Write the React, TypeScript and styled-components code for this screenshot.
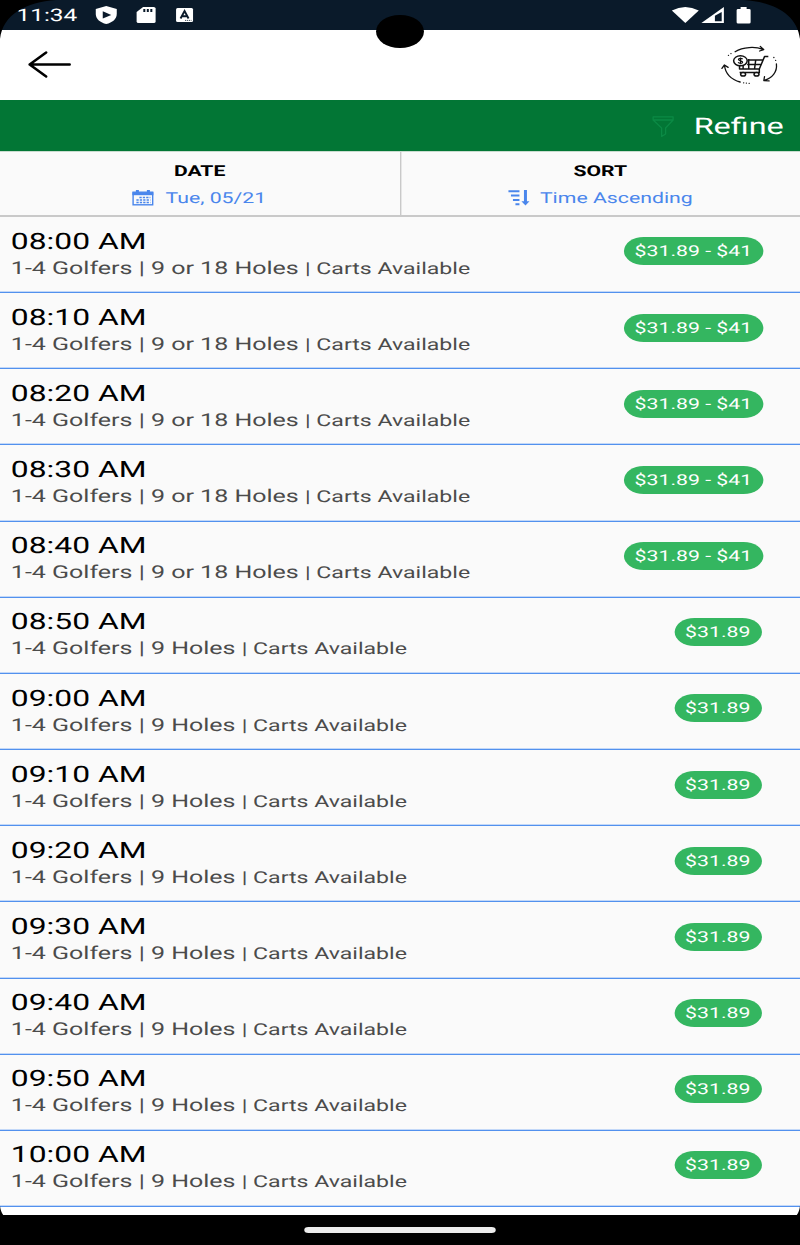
import React from 'react';
import styled, { createGlobalStyle } from 'styled-components';

const STRETCH = 800 / 568;

const GlobalStyle = createGlobalStyle`
  * { box-sizing: border-box; }
  html, body { margin: 0; padding: 0; background: #000; overflow: hidden; }
  body { font-family: Roboto, "Liberation Sans", sans-serif; text-rendering: geometricPrecision; }
`;

const Viewport = styled.div`
  width: 800px;
  height: 1245px;
  overflow: hidden;
`;

const Screen = styled.div`
  position: relative;
  display: flex;
  flex-direction: column;
  width: 568px;
  height: 1245px;
  background: #000;
  transform: scaleX(${STRETCH});
  transform-origin: 0 0;
`;

const StatusBar = styled.div`
  display: flex;
  align-items: flex-start;
  justify-content: space-between;
  height: 30px;
  flex: none;
  padding: 0 35.2px 0 11.8px;
  background: #0a1a2a;
  color: #fff;
`;

const StatusGroup = styled.div`
  display: flex;
  align-items: flex-start;
`;

const Clock = styled.span`
  width: 56.3px;
  font-size: 17.3px;
  line-height: 32px;
`;

const IconSvg = styled.svg<{ $w: number; $h: number; $mt?: number; $mr?: number }>`
  display: block;
  flex: none;
  overflow: visible;
  width: ${(p) => p.$w / STRETCH}px;
  height: ${(p) => p.$h}px;
  margin-top: ${(p) => p.$mt ?? 0}px;
  margin-right: ${(p) => (p.$mr ?? 0) / STRETCH}px;
`;

type IconProps = { w: number; h: number; mt?: number; mr?: number; children: React.ReactNode };

const Icon = ({ w, h, mt, mr, children }: IconProps) => (
  <IconSvg $w={w} $h={h} $mt={mt} $mr={mr} viewBox={`0 0 ${w} ${h}`} preserveAspectRatio="none" fill="none">
    {children}
  </IconSvg>
);

const Header = styled.header`
  display: flex;
  align-items: flex-start;
  justify-content: space-between;
  flex: none;
  height: 70px;
  padding: 16px 16.6px 0 20.4px;
  background: #fff;
`;

const RefineBar = styled.div`
  display: flex;
  align-items: center;
  justify-content: flex-end;
  flex: none;
  height: 51px;
  padding: 2px 11.5px 0 0;
  background: #027635;
  color: #fff;
  font-size: 23px;
  line-height: 49px;
`;

const Filters = styled.div`
  display: flex;
  flex: none;
  height: 66px;
  background: #fafafa;
  border-top: 1px solid #c9dccf;
  border-bottom: 2px solid #c9c9c9;
`;

const Filter = styled.div`
  flex: 1;
  display: flex;
  flex-direction: column;
  align-items: center;
  padding-top: 8.6px;
  & + & { border-left: 1px solid #c9c9c9; }
`;

const FilterLabel = styled.div`
  font-size: 15px;
  font-weight: 700;
  line-height: 20px;
  color: #000;
`;

const FilterValue = styled.div`
  display: flex;
  align-items: flex-start;
  margin-top: 7.7px;
  font-size: 15.1px;
  line-height: 20px;
  color: #4a86ec;
`;

const List = styled.div`
  flex: none;
  height: 998px;
  overflow: hidden;
  background: #fff;
`;

const Row = styled.div`
  display: flex;
  justify-content: space-between;
  height: 76.17px;
  padding: 10.6px 0 0 7.7px;
  background: #fafafa;
  border-bottom: 1px solid #5291ee;
  box-shadow: inset 0 -1px 0 #c3d8f8;
`;

const Time = styled.div`
  font-size: 22.6px;
  line-height: 28px;
  color: #000;
`;

const Detail = styled.div`
  font-size: 17.75px;
  line-height: 27px;
  color: #4b4b4b;
  white-space: pre;
`;

const Carts = styled.span`
  font-size: 16.4px;
`;

const Price = styled.div<{ $range: boolean }>`
  width: ${(p) => (p.$range ? 98.8 : 61.8)}px;
  height: 28px;
  margin: 9.9px ${(p) => (p.$range ? 26.3 : 27.5)}px 0 0;
  border-radius: 14px;
  background: #34b660;
  color: #fff;
  font-size: 15.1px;
  line-height: 29.6px;
  text-align: center;
`;

const NavBar = styled.div`
  display: flex;
  justify-content: center;
  flex: 1;
  padding-top: 12px;
`;

const HomeHandle = styled.div`
  width: 136.5px;
  height: 5.5px;
  border-radius: 3px;
  background: #ececec;
`;

const Camera = styled.div`
  position: absolute;
  top: 14.5px;
  left: calc(50% - 17px);
  width: 34px;
  height: 33.5px;
  border-radius: 50%;
  background: #000;
`;

const Bezel = styled.svg`
  position: absolute;
  top: 0;
  left: 0;
  width: 100%;
  height: 100%;
`;

const tee = (i: number) => {
  const minutes = 480 + i * 10;
  const pad = (n: number) => String(n).padStart(2, '0');
  return `${pad(Math.floor(minutes / 60))}:${pad(minutes % 60)} AM`;
};

const teeTimes = Array.from({ length: 13 }, (_, i) => ({ time: tee(i), range: i < 5 }));

const CartIcon = () => (
  <Icon w={56} h={38}>
    <g stroke="#111" strokeWidth="1.3" strokeLinecap="round" strokeLinejoin="round">
      <path d="M14 5.7C22 .8 34 .4 42 3.3M39.2 .5L42.6 3.6L38.5 5" />
      <path d="M3.4 19.3C4 27.5 10 33.7 19 36M.8 22.4L3.3 19L7 21.4" />
      <path d="M55.3 18C56.3 26 51 32 43 34.4M43.4 30.6L42.7 34.5L48 34.9" />
      <path d="M7.3 9.3h.1M9.8 7.6h.1M22.5 36.8h.1M25.2 37.1h.1M28 37.3h.1M52.7 11.5h.1M54.5 14.3h.1" />
    </g>
    <g stroke="#111" strokeWidth="1.5" strokeLinejoin="round">
      <path d="M47.2 10.6H43.4L38.2 23H18.4V18.5M26.5 14H41.5M26 18.4H40M18.5 26.6H38.2V23M27.6 13V23M34.6 14L33.4 23M22 20V23" />
      <ellipse cx="22" cy="28.2" rx="2.5" ry="1.8" fill="#fff" />
      <ellipse cx="35.4" cy="28.2" rx="2.5" ry="1.8" fill="#fff" />
      <ellipse cx="19.3" cy="14.8" rx="6.8" ry="5" fill="#fff" />
      <path d="M21.5 13.2C20.8 12.2 17.4 12 17.3 13.5C17.3 15 21.5 14.6 21.5 16.2C21.4 17.7 17.7 17.6 17 16.3M19.4 11.4V18.2" strokeWidth="1.2" />
    </g>
  </Icon>
);

const App = () => (
  <Viewport>
    <GlobalStyle />
    <Screen>
      <StatusBar>
        <StatusGroup>
          <Clock>11:34</Clock>
          <Icon w={21} h={18} mt={6} mr={19.5}>
            <path d="M10.5 0L21 3V8C21 13 16.5 16.7 10.5 18C4.5 16.7 0 13 0 8V3Z" fill="#fff" />
            <path d="M7 5.3L15.5 9L7 12.5Z" fill="#0a1a2a" />
          </Icon>
          <Icon w={19} h={16} mt={7} mr={21}>
            <path d="M6.5 0H17Q19 0 19 1.6V14.4Q19 16 17 16H2Q0 16 0 14.4V5Z" fill="#fff" />
            <path d="M7.7 2V5M11.2 2V5M14.7 2V5" stroke="#0a1a2a" strokeWidth="2" />
          </Icon>
          <Icon w={17} h={14} mt={8}>
            <rect width="17" height="14" rx="1.5" fill="#fff" />
            <path d="M4.5 10.5L8.5 3L12.5 10.5M6 8.3H11" stroke="#0a1a2a" strokeWidth="1.9" />
            <path d="M9 12.4H15.5" stroke="#0a1a2a" strokeWidth=".8" strokeDasharray="1.2 .8" />
          </Icon>
        </StatusGroup>
        <StatusGroup>
          <Icon w={27} h={16} mt={7} mr={2}>
            <path d="M0 3.5Q13.5 -3.5 27 3.5L13.5 16Z" fill="#fff" />
          </Icon>
          <Icon w={22.5} h={16} mt={7} mr={12.5}>
            <path d="M22.5 0V16H0Z" fill="#fff" />
            <path d="M20.3 5V14.2H13.5V8.8Z" fill="#0a1a2a" />
          </Icon>
          <Icon w={14} h={16.5} mt={6.5}>
            <path d="M4 0H10V2H12.5Q14 2 14 3.2V15.3Q14 16.5 12.5 16.5H1.5Q0 16.5 0 15.3V3.2Q0 2 1.5 2H4Z" fill="#fff" />
          </Icon>
        </StatusGroup>
      </StatusBar>

      <Header>
        <Icon w={43} h={27} mt={5.4}>
          <path d="M18 1.5L1.5 13.5L18 25.5M1.5 13.5H41.5" stroke="#000" strokeWidth="2.6" strokeLinecap="round" strokeLinejoin="round" />
        </Icon>
        <CartIcon />
      </Header>

      <RefineBar>
        <Icon w={22} h={21} mr={20}>
          <path d="M1 .8H21V4L13.5 12V18L9.5 20.5V12L1 4ZM1 4H21" stroke="#0b8a45" strokeWidth="1.3" strokeLinejoin="round" />
        </Icon>
        <span>Refine</span>
      </RefineBar>

      <Filters>
        <Filter>
          <FilterLabel>DATE</FilterLabel>
          <FilterValue>
            <Icon w={21} h={15.5} mt={1.5} mr={11.5}>
              <g stroke="#4a86ec">
                <rect x=".7" y="2.2" width="19.6" height="12.6" strokeWidth="1.4" />
                <path d="M0 3.7H21" strokeWidth="3" />
                <path d="M5 0V3.5M16 0V3.5" strokeWidth="3" />
                <path d="M7 7.5H18M4 10H18M4 12.5H18" strokeWidth="1.7" strokeDasharray="2.3 1.1" />
              </g>
            </Icon>
            <span>Tue, 05/21</span>
          </FilterValue>
        </Filter>
        <Filter>
          <FilterLabel>SORT</FilterLabel>
          <FilterValue>
            <Icon w={21} h={15.5} mt={1.5} mr={11}>
              <g stroke="#4a86ec" strokeWidth="2">
                <path d="M0 1.2H11M2.5 5.6H11M4.5 10H11M7 14.2H11" />
                <path d="M17 0V13" strokeWidth="3" />
              </g>
              <path d="M13 11.3H21L17 15.5Z" fill="#4a86ec" />
            </Icon>
            <span>Time Ascending</span>
          </FilterValue>
        </Filter>
      </Filters>

      <List>
        {teeTimes.map(({ time, range }) => (
          <Row key={time}>
            <div>
              <Time>{time}</Time>
              <Detail>
                {range ? '1-4 Golfers | 9 or 18 Holes ' : '1-4 Golfers | 9 Holes '}
                <Carts>| Carts Available</Carts>
              </Detail>
            </div>
            <Price $range={range}>{range ? '$31.89 - $41' : '$31.89'}</Price>
          </Row>
        ))}
      </List>

      <NavBar>
        <HomeHandle />
      </NavBar>

      <Camera />
      <Bezel viewBox="0 0 800 1245" preserveAspectRatio="none">
        <path d="M0 0H56C26 2 3 14 0 39Z" />
        <path d="M800 0H744C774 2 797 14 800 39Z" />
        <path d="M0 1206Q.8 1212 3.2 1215V1217H0ZM800 1206Q799.2 1212 796.8 1215V1217H800Z" />
      </Bezel>
    </Screen>
  </Viewport>
);

export default App;
